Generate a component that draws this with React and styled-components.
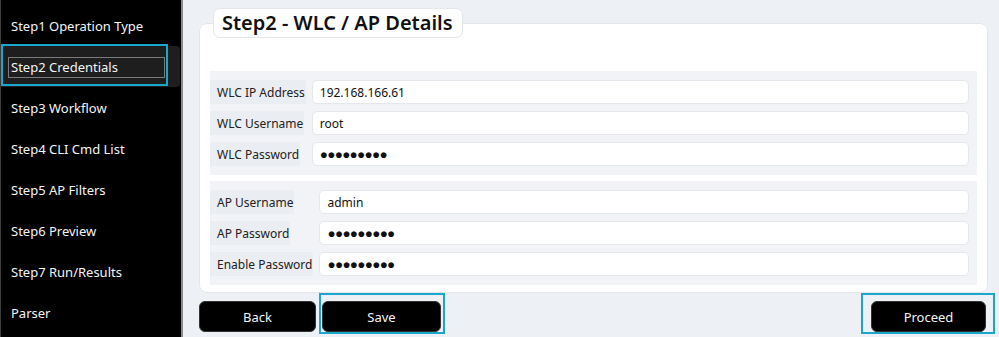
import React from "react";
import styled, { createGlobalStyle } from "styled-components";

const GlobalStyle = createGlobalStyle`
    html, body {
        margin: 0;
        padding: 0;
        background: #edf0f4;
    }
    body {
        font-family: "Noto Sans", "Open Sans", Arial, sans-serif;
    }
`

const Page = styled.div`
    width: 999px;
    height: 337px;
    display: flex;
    overflow: hidden;
`

const Sidebar = styled.nav`
    width: 183px;
    flex: none;
    background: #000;
    border-left: 1px solid #3a3a3a;
    border-right: 2px solid #8a8a8a;
    box-sizing: border-box;
    padding-top: 5px;
    display: flex;
    flex-direction: column;
`

const NavItem = styled.div`
    height: 41px;
    display: flex;
    align-items: center;
    padding-left: 10px;
    color: #f4f4f4;
    font-size: 13px;
    position: relative;
    background: ${p => p.active ? "#1e1e1e" : "transparent"};
    border-radius: ${p => p.active ? "0 4px 4px 0" : "0"};
    margin-right: 1px;
`

const ActiveRing = styled.div`
    position: absolute;
    left: 0;
    top: -2px;
    width: 167px;
    height: 42px;
    border: 2px solid #1ba6cb;
    box-sizing: border-box;
`

const ActiveLabel = styled.span`
    display: block;
    margin-left: -3px;
    width: 157px;
    height: 21px;
    line-height: 19px;
    box-sizing: border-box;
    border: 1px solid #7a7a7a;
    padding-left: 2px;
    margin-top: 1px;
`

const Main = styled.main`
    flex: 1;
    padding: 8px 11px 0 16px;
    display: flex;
    flex-direction: column;
    min-width: 0;
`

const Card = styled.fieldset`
    margin: 0;
    min-width: 0;
    background: #fff;
    border: 1px solid #e2e6eb;
    border-radius: 8px;
    padding: 33px 10px 7px 10px;
    display: flex;
    flex-direction: column;
    gap: 6px;
`

const Legend = styled.legend`
    margin-left: 3px;
    padding: 2px 9px 3px 8px;
    background: #fff;
    border: 1px solid #e3e6ea;
    border-radius: 7px;
    font-size: 20px;
    font-weight: 600;
    color: #111;
    line-height: 23px;
`

const Group = styled.div`
    background: #f1f3f6;
    padding: 9px 8px 9px 0;
    display: grid;
    grid-template-columns: auto 1fr;
    column-gap: 6px;
    row-gap: 7px;
`

const Label = styled.div`
    justify-self: start;
    background: #eaedf1;
    height: 24px;
    padding: 0 1px 0 7px;
    display: flex;
    align-items: center;
    font-size: 12px;
    color: #222;
`

const Field = styled.div`
    height: 24px;
    background: #fff;
    border: 1px solid #e4e7eb;
    border-radius: 5px;
    box-sizing: border-box;
    display: flex;
    align-items: center;
    padding-left: 7px;
    color: #111;
    font-size: ${p => p.secret ? "13.5px" : "12px"};
    letter-spacing: ${p => p.secret ? "-0.7px" : "0"};
`

const Footer = styled.div`
    display: flex;
    align-items: flex-end;
    gap: 3px;
    margin-right: -7px;
`

const Highlight = styled.div`
    border: 2px solid #1ba6cb;
    box-sizing: border-box;
    height: 41px;
    padding: ${p => p.pad};
    margin-left: ${p => p.push ? "auto" : "0"};
`

const Button = styled.button`
    width: ${p => p.w}px;
    height: 31px;
    background: #000;
    color: #f4f4f4;
    border: 1px solid #333;
    border-radius: 6px;
    font-family: inherit;
    font-size: 13px;
    margin-bottom: ${p => p.lift ? "2px" : "0"};
    cursor: pointer;
`

const steps = [
    "Step1 Operation Type",
    "Step2 Credentials",
    "Step3 Workflow",
    "Step4 CLI Cmd List",
    "Step5 AP Filters",
    "Step6 Preview",
    "Step7 Run/Results",
    "Parser",
]

const wlc = [
    ["WLC IP Address", "192.168.166.61"],
    ["WLC Username", "root"],
    ["WLC Password", null],
]

const ap = [
    ["AP Username", "admin"],
    ["AP Password", null],
    ["Enable Password", null],
]

function Rows({ rows }) {
    return rows.map(([label, value]) => (
        <React.Fragment key={label}>
            <Label>{label}</Label>
            <Field secret={value === null}>{value === null ? "●●●●●●●●●" : value}</Field>
        </React.Fragment>
    ))
}

export default function App() {
    return (
        <>
            <GlobalStyle />
            <Page>
                <Sidebar>
                    {steps.map((s, i) => i === 1 ? (
                        <NavItem key={s} active>
                            <ActiveRing />
                            <ActiveLabel>{s}</ActiveLabel>
                        </NavItem>
                    ) : (
                        <NavItem key={s}>{s}</NavItem>
                    ))}
                </Sidebar>
                <Main>
                    <Card>
                        <Legend>Step2 - WLC / AP Details</Legend>
                        <Group>
                            <Rows rows={wlc} />
                        </Group>
                        <Group>
                            <Rows rows={ap} />
                        </Group>
                    </Card>
                    <Footer>
                        <Button w={117} lift>Back</Button>
                        <Highlight pad="6px 2px 0 1px">
                            <Button w={119}>Save</Button>
                        </Highlight>
                        <Highlight push pad="6px 7px 0 8px">
                            <Button w={115}>Proceed</Button>
                        </Highlight>
                    </Footer>
                </Main>
            </Page>
        </>
    )
}
